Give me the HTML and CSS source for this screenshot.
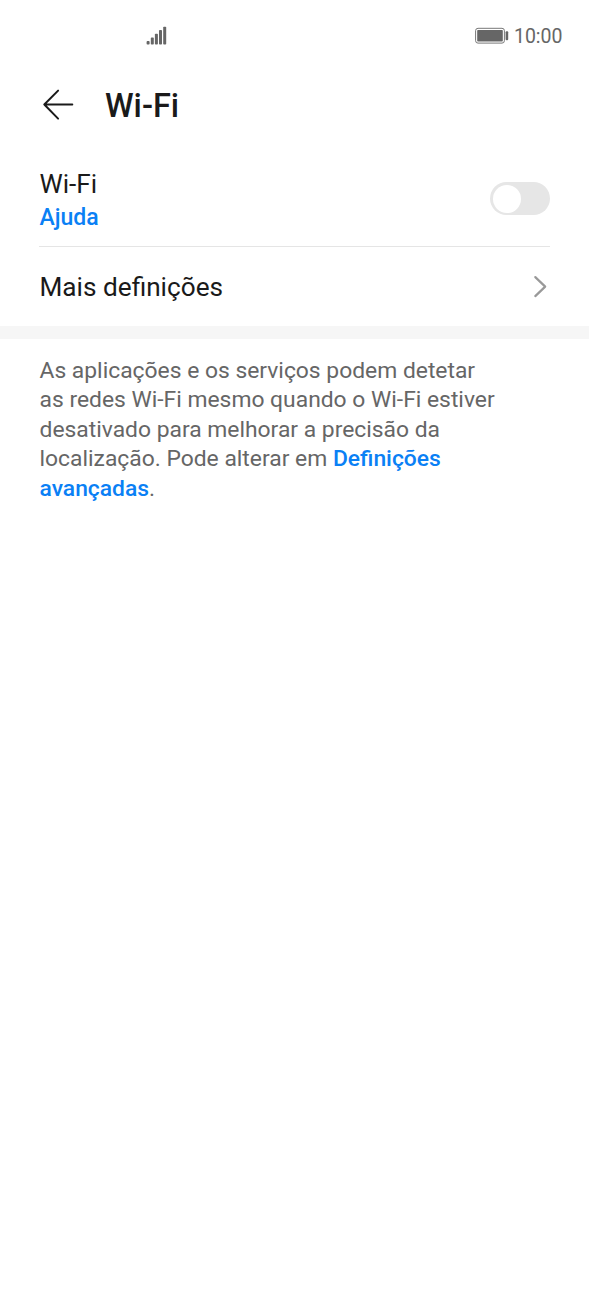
FILE: index.html
```html
<!DOCTYPE html>
<html lang="pt">
<head>
<meta charset="utf-8">
<title>Wi-Fi</title>
<link rel="stylesheet" href="styles.css">
</head>
<body>
<div class="status">
  <svg class="signal" width="22" height="20" viewBox="0 0 22 20" fill="#666"><rect x="0.6" y="15.1" width="3" height="3.4" rx=".8"/><rect x="4.8" y="11.6" width="3" height="6.9" rx=".8"/><rect x="8.9" y="7.8" width="3" height="10.7" rx=".8"/><rect x="13" y="4.1" width="3" height="14.4" rx=".8"/><rect x="17.2" y="0.8" width="3" height="17.7" rx=".8"/></svg>
  <svg class="battery" width="34" height="18" viewBox="0 0 34 18"><rect x=".6" y="1.3" width="28.8" height="14.8" rx="2.4" fill="none" stroke="#777" stroke-width="1"/><rect x="2.2" y="2.9" width="25.6" height="11.6" rx=".8" fill="#666"/><rect x="30.6" y="4.2" width="2.6" height="9" rx="1" fill="#666"/></svg>
  <span class="time">10:00</span>
</div>
<header class="header">
  <svg class="back" width="32" height="32" viewBox="0 0 32 32" fill="none" stroke="#1a1a1a" stroke-width="2" stroke-linecap="round" stroke-linejoin="round"><path d="M30.3 15.5H2.3M16.1 1.6L2.3 15.5L16.1 29.6"/></svg>
  <h1 class="title">Wi-Fi</h1>
</header>
<section class="row wifi">
  <div class="labels"><div class="label">Wi-Fi</div><a class="link help">Ajuda</a></div>
  <div class="switch"><div class="knob"></div></div>
</section>
<section class="row more">
  <div class="label">Mais definições</div>
  <svg class="chevron" width="15" height="24" viewBox="0 0 15 24" fill="none" stroke="#999" stroke-width="2.2" stroke-linecap="round" stroke-linejoin="round"><path d="M2.3 2.1L12.2 11.6L2.3 21.1"/></svg>
</section>
<div class="band"></div>
<p class="note">As aplicações e os serviços podem detetar<br>as redes Wi-Fi mesmo quando o Wi-Fi estiver<br>desativado para melhorar a precisão da<br>localização. Pode alterar em <a class="link">Definições<br>avançadas</a>.</p>
</body>
</html>
```
FILE: styles.css
```css
* { box-sizing: border-box; }
body { margin: 0; min-height: 1309px; background: #fff; color: #1a1a1a; font-family: Roboto, sans-serif; }
svg { display: block; flex: none; }
.status { display: flex; height: 72px; padding: 0 26.5px 0 146px; align-items: center; color: #666; }
.signal { margin-right: auto; }
.battery { margin-right: 5px; }
.time { padding-top: 1px; font-size: 19.5px; line-height: 24px; }
.header { display: flex; height: 68px; padding-left: 42px; align-items: center; }
.back { margin-top: -2px; }
.title { margin: 0 0 0 31px; font-size: 32.5px; line-height: 40px; font-weight: 500; }
.row { display: flex; margin: 0 39px; align-items: center; justify-content: space-between; }
.wifi { height: 107px; padding-top: 11px; border-bottom: 1px solid #e5e5e5; }
.labels { padding-top: 2px; }
.label { padding-left: 0.5px; font-size: 26.2px; line-height: 34px; }
.link { color: #0a80f5; font-weight: 500; }
.help { display: block; padding: 1px 0 0 0.5px; font-size: 23px; line-height: 31px; }
.switch { width: 60px; height: 33px; padding: 2.5px 3px; border-radius: 17px; background: #e6e6e6; }
.knob { width: 28px; height: 28px; border-radius: 50%; background: #fff; }
.more { height: 79px; }
.chevron { margin-right: 2px; }
.band { height: 13px; background: #f6f6f6; }
.note { margin: 17px 0 0 39.5px; font-size: 22.85px; line-height: 29.4px; color: #666; white-space: nowrap; }
```
